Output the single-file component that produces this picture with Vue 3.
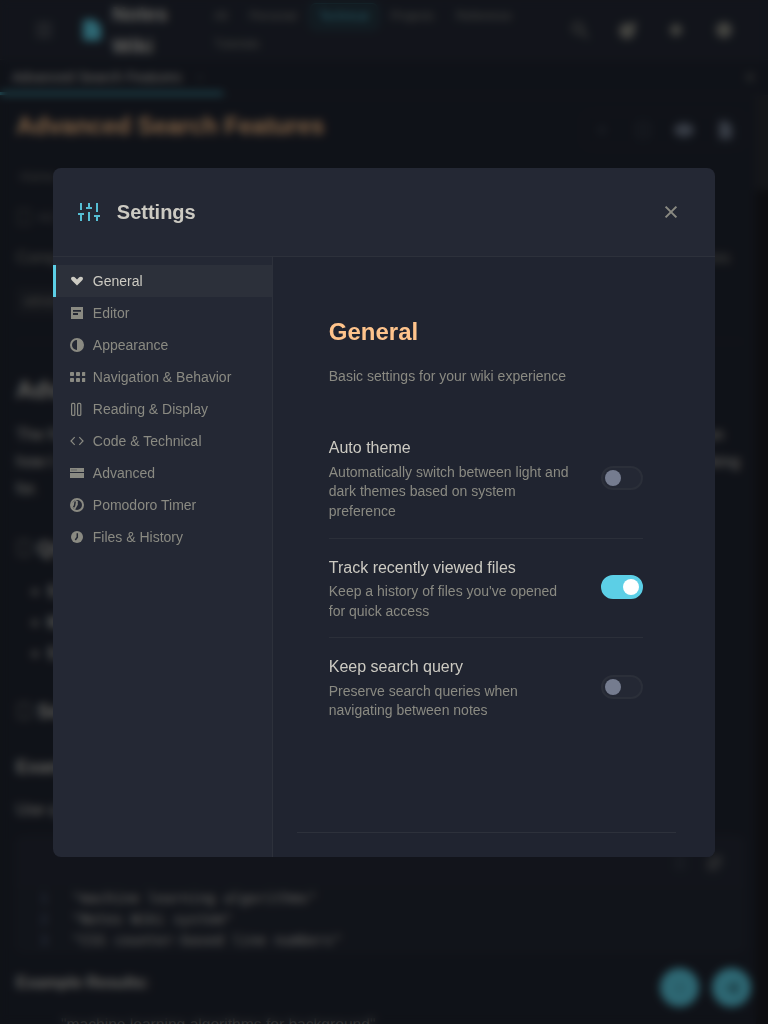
<script setup>
import { ref } from 'vue'

const categories = ['All', 'Personal', 'Technical', 'Projects', 'Reference', 'Tutorials']
const sections = [
  { id: 'general', label: 'General' },
  { id: 'editor', label: 'Editor' },
  { id: 'appearance', label: 'Appearance' },
  { id: 'navigation', label: 'Navigation & Behavior' },
  { id: 'reading', label: 'Reading & Display' },
  { id: 'code', label: 'Code & Technical' },
  { id: 'advanced', label: 'Advanced' },
  { id: 'pomodoro', label: 'Pomodoro Timer' },
  { id: 'files', label: 'Files & History' }
]
const active = ref('general')
const options = ref([
  { title: 'Auto theme', text: 'Automatically switch between light and dark themes based on system preference', on: false },
  { title: 'Track recently viewed files', text: "Keep a history of files you've opened for quick access", on: true },
  { title: 'Keep search query', text: 'Preserve search queries when navigating between notes', on: false }
])
const codeLines = ['"machine learning algorithms"', '"Notes Wiki system"', '"CSS counter-based line numbers"']
</script>

<template>
  <div class="page">
    <header class="topbar">
      <svg class="burger" viewBox="0 0 24 24"><path d="M4 6h16M4 12h16M4 18h16" /></svg>
      <svg class="logo" viewBox="0 0 20 22"><path d="M2 0h10l7 7v13a2 2 0 0 1-2 2H2a2 2 0 0 1-2-2V2a2 2 0 0 1 2-2z" /></svg>
      <div class="brand">Notes Wiki</div>
      <nav class="cats">
        <span v-for="c in categories" :key="c" class="cat" :class="{ on: c === 'Technical' }">{{ c }}</span>
      </nav>
      <div class="actions">
        <svg viewBox="0 0 20 20"><circle cx="8" cy="8" r="5" class="thin" /><path class="thin" d="M12 12l6 6" /></svg>
        <svg viewBox="0 0 20 20"><circle cx="9" cy="11" r="8" /><path d="M12 4l7-3-2 8z" /></svg>
        <svg viewBox="0 0 20 20"><circle cx="10" cy="10" r="6" /></svg>
        <svg viewBox="0 0 20 20"><circle cx="10" cy="10" r="8" /></svg>
      </div>
    </header>

    <div class="tabs">
      <div class="tab">Advanced Search Features<span class="tab-x">×</span></div>
      <span class="close-all">×</span>
    </div>

    <main class="doc">
      <div class="doc-head">
        <h1>Advanced Search Features</h1>
        <div class="tools">
          <svg viewBox="0 0 20 20"><path class="dim" d="M10 5v10M5 10h10" /></svg>
          <svg viewBox="0 0 20 20"><path class="dim" d="M4 4h12v12H4z" /></svg>
          <svg viewBox="0 0 20 20"><ellipse cx="10" cy="10" rx="10" ry="7" /></svg>
          <svg viewBox="0 0 20 20"><path d="M4 1h8l5 5v13H4z" /></svg>
        </div>
      </div>
      <div class="crumb">Home</div>
      <div class="meta"><i class="box"></i>Ad</div>
      <div class="lead"><span>Comp</span><span>features</span></div>
      <div class="tags"><span>advan</span></div>
      <hr />
      <h2>Adv</h2>
      <div class="para">
        <p><span>The N</span><span class="short">on</span></p>
        <p><span>how t</span><span>looking</span></p>
        <p><span>for.</span></p>
      </div>
      <h3><i class="box"></i>Qu</h3>
      <ul>
        <li>S</li>
        <li>M</li>
        <li>S</li>
      </ul>
      <h3 class="second"><i class="box"></i>Sea</h3>
      <h4>Exam</h4>
      <p class="use">Use q</p>
      <div class="code">
        <div class="code-head">
          <svg viewBox="0 0 20 20"><path class="dim" d="M4 5h12M4 10h12M4 15h12" /></svg>
          <svg viewBox="0 0 20 20"><path d="M6 2h11v11h-4v5H2V6h4z" /></svg>
        </div>
        <div class="code-body">
          <div v-for="(line, i) in codeLines" :key="i" class="line"><b>{{ i + 1 }}</b>{{ line }}</div>
        </div>
      </div>
      <p class="results">Example Results:</p>
      <p class="result">"machine learning algorithms for background"</p>
    </main>
    <div class="track"><div class="thumb"></div></div>
    <div class="fabs">
      <span><svg viewBox="0 0 20 20"><path d="M5 10h10M10 5v10" /></svg></span>
      <span><svg viewBox="0 0 20 20"><path class="solid" d="M16 3v14L3 10z" /></svg></span>
    </div>
  </div>

  <div class="overlay">
    <section class="modal">
      <header class="modal-head">
        <svg class="sliders" viewBox="0 0 24 24"><path d="M4 21v-7M4 10V3M12 21v-9M12 8V3M20 21v-5M20 12V3M1 14h6M9 8h6M17 16h6" /></svg>
        <div class="modal-title">Settings</div>
        <svg class="close" viewBox="0 0 24 24"><path d="M17.4 6.6L6.6 17.4M6.6 6.6l10.8 10.8" /></svg>
      </header>
      <div class="modal-body">
        <nav class="side">
          <div v-for="s in sections" :key="s.id" class="item" :class="{ active: s.id === active }" @click="active = s.id">
            <svg viewBox="0 0 16 14">
              <path v-if="s.id === 'general'" class="fill" d="M1 4.6Q1 2.7 3 2.7Q4.6 2.7 5.3 3.8L7 5.5L8.7 3.8Q9.4 2.7 11 2.7Q13 2.7 13 4.6Q13 5.6 12 6.5L7 11.5L2 6.5Q1 5.6 1 4.6Z" />
              <path v-else-if="s.id === 'editor'" class="fill" fill-rule="evenodd" d="M1 1h12v12H1zM3 4v1.8h8V4zM3 7.1v1.8h5V7.1z" />
              <g v-else-if="s.id === 'appearance'"><circle class="ring" cx="7" cy="7" r="6" /><path class="fill" d="M7 1a6 6 0 0 1 0 12z" /></g>
              <g v-else-if="s.id === 'navigation'" class="fill">
                <rect x="0" y="2" width="4" height="4" rx=".8" /><rect x="6" y="2" width="4" height="4" rx=".8" /><rect x="12" y="2" width="3.2" height="4" rx=".6" />
                <rect x="0" y="8" width="4" height="4" rx=".8" /><rect x="6" y="8" width="4" height="4" rx=".8" /><rect x="12" y="8" width="3.2" height="4" rx=".6" />
              </g>
              <g v-else-if="s.id === 'reading'" class="line1"><rect x="1.6" y="1.4" width="3.2" height="12" rx="1" /><rect x="7.6" y="1.4" width="3.2" height="12" rx="1" /></g>
              <path v-else-if="s.id === 'code'" class="line1" d="M4.7 3.2L1 7l3.7 3.8M9.3 3.2L13 7l-3.7 3.8" />
              <g v-else-if="s.id === 'advanced'" class="fill"><path d="M0 2h14v4H0zM0 7h14v5H0z" /><path class="slot" d="M1 3.2h6v1.5H1z" /></g>
              <g v-else-if="s.id === 'pomodoro'"><circle class="ring" cx="7" cy="7" r="6" /><path class="fill" d="M5.4 2L7.8 3V6.7L5 11.8L2 9V5z" /><path class="cut" d="M5.2 3.5L4.5 7.8L3.5 9.2" /></g>
              <g v-else><circle class="fill" cx="7" cy="7" r="6" /><path class="cut" d="M7.3 3.3v4L5.3 10" /></g>
            </svg>
            <span>{{ s.label }}</span>
          </div>
        </nav>
        <div class="content">
          <div class="panel">
            <div class="heading">General</div>
            <p class="intro">Basic settings for your wiki experience</p>
            <div v-for="o in options" :key="o.title" class="row">
              <div class="info">
                <div class="name">{{ o.title }}</div>
                <div class="desc">{{ o.text }}</div>
              </div>
              <span class="toggle" :class="{ on: o.on }" @click="o.on = !o.on"></span>
            </div>
          </div>
        </div>
      </div>
    </section>
  </div>
</template>

<style>
html, body { margin: 0; overflow: hidden; background: #1f2430; }
</style>

<style scoped>
* { box-sizing: border-box; }
.page { position: relative; width: 768px; height: 1024px; overflow: hidden; background: #1f2430; color: #cccac2; font-family: "Liberation Sans", Arial, sans-serif; }
p, h1, h2, h3, h4, ul { margin: 0; padding: 0; }
svg { display: block; flex: none; }

.topbar { display: flex; align-items: center; height: 60px; background: #242936; border-bottom: 1px solid #2d313b; }
.burger { width: 24px; height: 24px; margin-left: 32px; fill: none; stroke: #74767a; stroke-width: 2; }
.logo { width: 19px; height: 22px; margin-left: 27px; fill: #5ccfe6; }
.brand { width: 70px; margin-left: 10px; font-size: 20px; font-weight: 700; line-height: 32px; }
.cats { display: flex; flex-wrap: wrap; gap: 4px; width: 332px; margin-left: 23px; }
.cat { height: 24px; padding: 0 8px; border: 1px solid transparent; border-radius: 6px; font-size: 12px; line-height: 22px; color: #8a8a82; }
.cat.on { height: 26px; margin: -1px 0; line-height: 24px; border-color: #33707e; background: #22323d; color: #50bfd4; }
.actions { display: flex; gap: 28px; margin-left: 33px; fill: #8a8a82; }
.actions svg { width: 20px; height: 20px; }
.thin { fill: none; stroke: #8a8a82; stroke-width: 2; }

.tabs { display: flex; justify-content: space-between; height: 36px; border-bottom: 1px solid #2d313b; }
.tab { width: 223px; padding-left: 12px; border-bottom: 3px solid #46b0c4; font-size: 14px; line-height: 34px; color: #cccac2; white-space: nowrap; }
.tab-x { margin-left: 15px; font-size: 12px; color: #56585c; }
.close-all { padding-right: 12px; font-size: 20px; line-height: 34px; color: #74766f; }

.doc { width: 756px; padding: 0 12px 0 16px; }
.doc-head { display: flex; justify-content: space-between; align-items: center; height: 61px; }
h1 { margin-top: -1px; font-size: 24px; line-height: 32px; color: #ffc48c; }
.tools { display: flex; align-items: center; gap: 21px; height: 36px; margin-top: 7px; padding: 0 8px; border: 1px solid #2d313b; border-radius: 6px; fill: #707a8c; }
.tools svg { width: 20px; height: 20px; }
.dim { fill: none; stroke: #3d434f; stroke-width: 2; }
.crumb { height: 40px; padding-left: 4px; font-size: 13px; line-height: 40px; color: #777773; }
.meta { display: flex; align-items: center; gap: 7px; height: 40px; font-size: 14px; color: #606165; }
.box { width: 12px; height: 16px; margin-left: 2px; border: 1px solid #75756f; }
.lead { display: flex; justify-content: space-between; height: 42px; padding-right: 14px; font-size: 16px; line-height: 42px; color: #8a8a82; }
.tags { height: 44px; padding-top: 8px; }
.tags span { display: inline-block; height: 28px; padding: 0 8px; border-radius: 4px; font-size: 13px; line-height: 28px; color: #8a8a82; background: #292d37; }
hr { height: 1px; margin: 18px 0 0; border: 0; background: #2b2f39; }
h2 { height: 79px; padding-top: 32px; font-size: 24px; line-height: 32px; }
.para { height: 81px; font-size: 16px; line-height: 27px; color: #cccac2; }
.para p { display: flex; justify-content: space-between; padding-right: 4px; }
.short { padding-right: 16px; }
h3 { display: flex; align-items: center; gap: 7px; height: 32px; margin-top: 30px; font-size: 20px; }
h3 .box { border-color: #a5a49e; }
ul { margin-top: 12px; padding-left: 16px; font-size: 16px; font-weight: 700; line-height: 31px; }
li { list-style: none; }
li::before { content: ""; display: inline-block; width: 6px; height: 6px; margin-right: 9px; vertical-align: 2px; border-radius: 50%; background: #a5a49e; }
h3.second { margin-top: 26px; }
h4 { height: 40px; margin-top: 20px; font-size: 18px; line-height: 40px; }
.use { height: 45px; font-size: 16px; line-height: 46px; color: #cccac2; }
.code { width: 728px; height: 116px; margin-top: 4px; border: 1px solid #2d313b; background: #232834; border-radius: 6px; overflow: hidden; }
.code-head { display: flex; justify-content: flex-end; align-items: center; gap: 15px; height: 48px; padding-right: 18px; fill: #4b4e54; background: #242936; border-bottom: 1px solid #2d313b; }
.code-head svg { width: 20px; height: 20px; margin-top: 5px; }
.code-body { padding: 3px 0 0 23px; font: 14px/21px "DejaVu Sans Mono", monospace; color: #cccac2; }
.line b { display: inline-block; width: 32px; color: #5c6c8c; font-weight: 400; }
.results { margin-top: 18px; font-size: 16px; font-weight: 700; line-height: 26px; }
.result { margin-top: 16px; padding-left: 45px; font-size: 15.6px; line-height: 26px; color: #94938e; }
.track { position: absolute; top: 96px; right: 0; bottom: 0; width: 12px; background: #191b20; }
.thumb { height: 94px; background: #292c33; }
.fabs { position: absolute; left: 660px; top: 968px; display: flex; gap: 13px; }
.fabs span { display: grid; place-items: center; width: 39px; height: 39px; border-radius: 50%; background: #5ccfe6; }
.fabs svg { width: 20px; height: 20px; fill: none; stroke: #49a4b6; stroke-width: 2; }
.fabs .solid { fill: #3a8291; stroke: none; }

.overlay { position: fixed; inset: 0; display: grid; place-items: center; background: rgba(0, 0, 0, .5); backdrop-filter: blur(4px); font-family: "Liberation Sans", Arial, sans-serif; color: #cccac2; }
.modal { width: 662.4px; height: 689px; overflow: hidden; border-radius: 8px; background: #242834; margin-top: 1px; }
.modal-head { display: flex; align-items: center; height: 89px; padding: 0 32px 0 24px; border-bottom: 1px solid #2d313b; }
.sliders { width: 24px; height: 24px; fill: none; stroke: #5ccfe6; stroke-width: 2; opacity: .9; }
.modal-title { flex: 1; margin-left: 16px; font-size: 20px; font-weight: 700; line-height: 32px; }
.close { width: 24px; height: 24px; fill: none; stroke: #8a8a82; stroke-width: 2; }
.modal-body { display: flex; height: 600px; }
.side { width: 220px; padding-top: 8px; border-right: 1px solid #2d313b; }
.item { display: flex; align-items: center; gap: 7px; height: 32px; padding-left: 14px; border-left: 3px solid transparent; font-size: 14px; color: #8a8a82; }
.item svg { width: 16px; height: 14px; }
.item.active { color: #cccac2; background: #2c303a; border-left-color: #5ccfe6; }
.fill { fill: currentColor; }
.ring { fill: none; stroke: currentColor; stroke-width: 2; }
.line1 { fill: none; stroke: currentColor; stroke-width: 1.2; }
.slot { fill: #70716e; }
.cut { fill: none; stroke: #242834; stroke-width: 1.5; }
.content { flex: 1; padding: 24px 39.2px 24px 23.8px; background: #202430; }
.panel { height: 552px; padding: 32px 33.2px 0 32.2px; border-bottom: 1px solid #2d313b; }
.heading { font-size: 24px; font-weight: 700; line-height: 38px; color: #ffc48c; }
.intro { margin: 14px 0 32.4px; font-size: 14px; line-height: 22px; color: #8a8a82; }
.row { display: flex; align-items: center; gap: 32px; padding: 16px 0; border-bottom: 1px solid #2b2f39; }
.row:last-child { border-bottom: 0; }
.info { flex: 1; }
.name { margin-bottom: 1.9px; font-size: 16px; line-height: 25.6px; }
.desc { font-size: 14px; line-height: 19.6px; color: #8a8a82; }
.toggle { display: flex; align-items: center; flex: none; width: 42px; height: 24px; margin-bottom: 1.6px; padding: 0 2px; border: 2px solid #2b2f39; border-radius: 12px; background: #242834; }
.toggle::after { content: ""; width: 16px; height: 16px; border-radius: 50%; background: #757c8f; }
.toggle.on { justify-content: flex-end; border-color: #5ccfe6; background: #5ccfe6; }
.toggle.on::after { background: #fff; }
</style>
